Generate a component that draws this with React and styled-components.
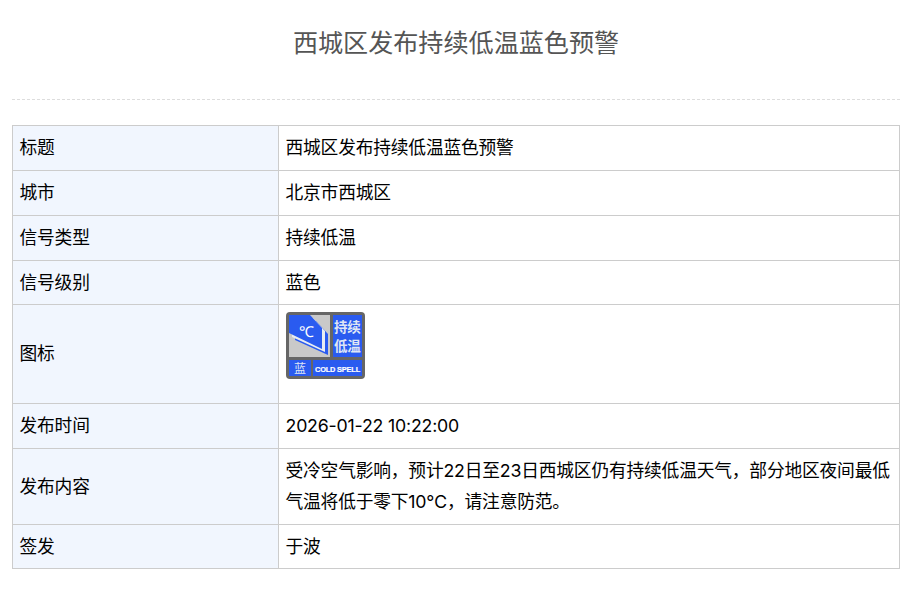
import styled, { createGlobalStyle } from 'styled-components';

const Reset = createGlobalStyle`
  body {
    margin: 0;
    background: #fff;
    font-family: Inter, "Noto Sans CJK SC", "Liberation Sans", sans-serif;
  }
`;

const Page = styled.div`
  width: 915px;
  height: 590px;
  padding: 0 15px 0 12px;
  box-sizing: border-box;
  overflow: hidden;
`;

const Header = styled.div`
  height: 74px;
  padding-top: 25px;
  border-bottom: 1px dashed #ddd;
  margin-bottom: 25px;
`;

const Title = styled.h1`
  margin: 0;
  font-size: 25.1px;
  font-weight: 400;
  line-height: 36px;
  text-align: center;
  color: #555;
`;

const Table = styled.table`
  width: 888px;
  table-layout: fixed;
  border-collapse: collapse;
  font-size: 17.75px;
  letter-spacing: -0.2px;
  line-height: 31px;
  color: #000;
`;

const Row = styled.tr`
  height: ${(p) => p.$height}px;
`;

const Label = styled.td`
  width: 266px;
  box-sizing: border-box;
  padding: 5.5px 6px 6.5px 6.5px;
  background: #f1f6fe;
  border: 1px solid #ccc;
`;

const Value = styled.td`
  padding: 5.5px 6px 6.5px 6.5px;
  border: 1px solid #ccc;
`;

const IconWrap = styled.div`
  display: flex;
  height: 86px;
  padding-top: 1px;
  box-sizing: border-box;
  align-items: flex-start;
`;

const ColdIcon = () => (
  <svg width="80" height="68" viewBox="0 0 80 68">
    <rect x="0" y="0" width="79" height="67" rx="4" fill="#666" />
    <rect x="3" y="3" width="41" height="42" fill="#c9c9c9" />
    <path d="M9 9L30 9L42 22V43L9 28Z" fill="#2a5bf0" />
    <path d="M6 6L27 6L39 19V40L6 25Z" fill="#e9edf2" />
    <path d="M3 3H24L36 16V37L3 21Z" fill="#2a5bf0" />
    <text x="13" y="25" fontSize="15" fill="#fff" fontFamily="Liberation Sans">℃</text>
    <rect x="47" y="3" width="29" height="42" fill="#2a5bf0" />
    <text x="48" y="20" fontSize="13.5" fontWeight="700" fill="#dfe6f5" fontFamily="Noto Sans CJK SC">持续</text>
    <text x="48" y="39" fontSize="13.5" fontWeight="700" fill="#dfe6f5" fontFamily="Noto Sans CJK SC">低温</text>
    <rect x="3" y="48" width="22" height="16" fill="#2a5bf0" />
    <text x="8" y="61" fontSize="12" fill="#dfe6f5" fontFamily="Noto Sans CJK SC">蓝</text>
    <rect x="27" y="48" width="49" height="16" fill="#2a5bf0" />
    <text x="29" y="60" fontSize="8" fontWeight="700" fill="#fff" stroke="#fff" strokeWidth="0.2" fontFamily="Liberation Sans" textLength="45" lengthAdjust="spacingAndGlyphs">COLD SPELL</text>
  </svg>
);

const rows = [
  ['标题', '西城区发布持续低温蓝色预警', 45],
  ['城市', '北京市西城区', 45],
  ['信号类型', '持续低温', 45],
  ['信号级别', '蓝色', 44],
  ['图标', <IconWrap><ColdIcon /></IconWrap>, 99],
  ['发布时间', '2026-01-22 10:22:00', 45],
  ['发布内容', '受冷空气影响，预计22日至23日西城区仍有持续低温天气，部分地区夜间最低气温将低于零下10℃，请注意防范。', 76],
  ['签发', '于波', 44],
];

export default function App() {
  return (
    <Page>
      <Reset />
      <Header>
        <Title>西城区发布持续低温蓝色预警</Title>
      </Header>
      <Table>
        <tbody>
          {rows.map(([label, value, height]) => (
            <Row key={label} $height={height}>
              <Label>{label}</Label>
              <Value>{value}</Value>
            </Row>
          ))}
        </tbody>
      </Table>
    </Page>
  );
}
